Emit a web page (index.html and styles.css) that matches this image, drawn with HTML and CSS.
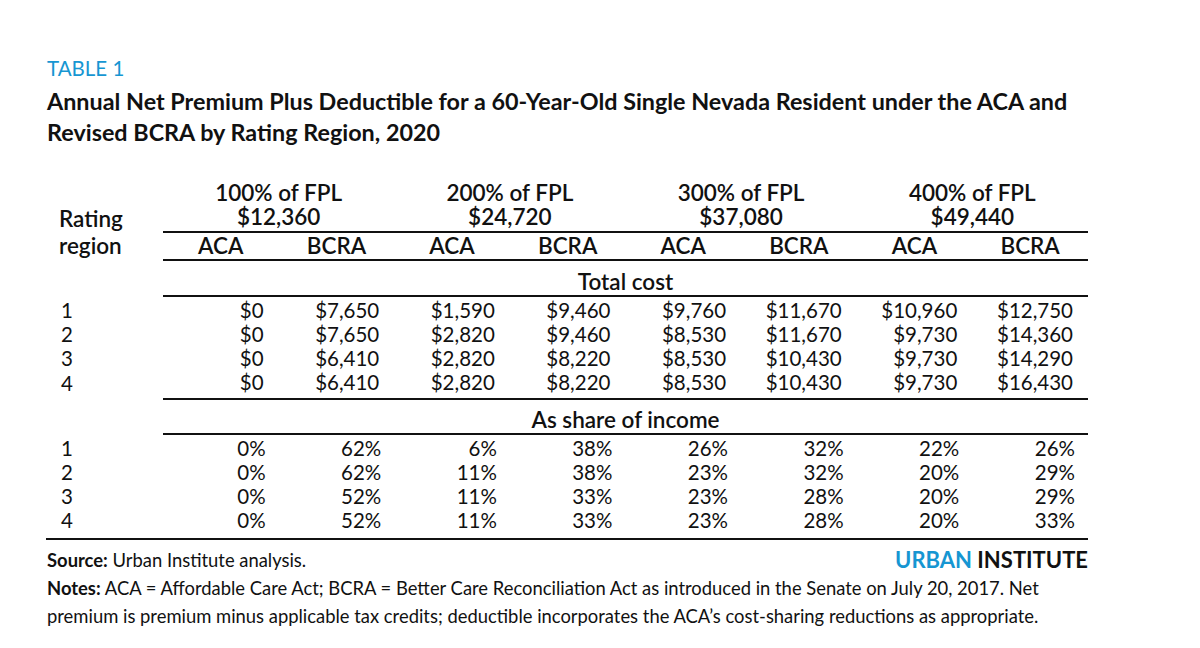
FILE: index.html
```html
<!DOCTYPE html>
<html lang="en">
<head>
<meta charset="utf-8">
<title>Table 1</title>
<link rel="stylesheet" href="styles.css">
</head>
<body>
<div class="page">
  <div class="label">TABLE 1</div>
  <h1 class="title">Annual Net Premium Plus Deductible for a 60-Year-Old Single Nevada Resident under the ACA and Revised BCRA by Rating Region, 2020</h1>

  <table class="data">
    <colgroup>
      <col class="c-region">
      <col class="c-num"><col class="c-num"><col class="c-num"><col class="c-num">
      <col class="c-num"><col class="c-num"><col class="c-num"><col class="c-num">
    </colgroup>
    <thead>
      <tr class="r-group">
        <th class="h-region" rowspan="2">Rating<br>region</th>
        <th colspan="2" class="h-group">100% of FPL<br>$12,360</th>
        <th colspan="2" class="h-group">200% of FPL<br>$24,720</th>
        <th colspan="2" class="h-group">300% of FPL<br>$37,080</th>
        <th colspan="2" class="h-group">400% of FPL<br>$49,440</th>
      </tr>
      <tr class="r-sub">
        <th>ACA</th><th>BCRA</th><th>ACA</th><th>BCRA</th>
        <th>ACA</th><th>BCRA</th><th>ACA</th><th>BCRA</th>
      </tr>
    </thead>
    <tbody class="sec sec-cost">
      <tr class="r-sec">
        <td class="blank"></td>
        <th colspan="8">Total cost</th>
      </tr>
      <tr class="first"><td class="rg">1</td><td>$0</td><td>$7,650</td><td>$1,590</td><td>$9,460</td><td>$9,760</td><td>$11,670</td><td>$10,960</td><td>$12,750</td></tr>
      <tr><td class="rg">2</td><td>$0</td><td>$7,650</td><td>$2,820</td><td>$9,460</td><td>$8,530</td><td>$11,670</td><td>$9,730</td><td>$14,360</td></tr>
      <tr><td class="rg">3</td><td>$0</td><td>$6,410</td><td>$2,820</td><td>$8,220</td><td>$8,530</td><td>$10,430</td><td>$9,730</td><td>$14,290</td></tr>
      <tr class="last"><td class="rg">4</td><td>$0</td><td>$6,410</td><td>$2,820</td><td>$8,220</td><td>$8,530</td><td>$10,430</td><td>$9,730</td><td>$16,430</td></tr>
    </tbody>
    <tbody class="sec sec-end">
      <tr class="r-sec">
        <td class="blank"></td>
        <th colspan="8">As share of income</th>
      </tr>
      <tr class="first"><td class="rg">1</td><td class="pc">0%</td><td class="pc">62%</td><td class="pc">6%</td><td class="pc">38%</td><td class="pc">26%</td><td class="pc">32%</td><td class="pc">22%</td><td class="pc">26%</td></tr>
      <tr><td class="rg">2</td><td class="pc">0%</td><td class="pc">62%</td><td class="pc">11%</td><td class="pc">38%</td><td class="pc">23%</td><td class="pc">32%</td><td class="pc">20%</td><td class="pc">29%</td></tr>
      <tr><td class="rg">3</td><td class="pc">0%</td><td class="pc">52%</td><td class="pc">11%</td><td class="pc">33%</td><td class="pc">23%</td><td class="pc">28%</td><td class="pc">20%</td><td class="pc">29%</td></tr>
      <tr class="last"><td class="rg">4</td><td class="pc">0%</td><td class="pc">52%</td><td class="pc">11%</td><td class="pc">33%</td><td class="pc">23%</td><td class="pc">28%</td><td class="pc">20%</td><td class="pc">33%</td></tr>
    </tbody>
  </table>

  <div class="foot">
    <p class="source"><b>Source:</b> Urban Institute analysis.</p>
    <div class="brand"><span class="urban">URBAN</span> INSTITUTE</div>
  </div>
  <p class="notes"><b>Notes:</b> ACA = Affordable Care Act; BCRA = Better Care Reconciliation Act as introduced in the Senate on July 20, 2017. Net premium is premium minus applicable tax credits; deductible incorporates the ACA’s cost-sharing reductions as appropriate.</p>
</div>
</body>
</html>
```

FILE: styles.css
```css
* { box-sizing: border-box; }

html, body {
  margin: 0;
  padding: 0;
  background: #ffffff;
}

body {
  font-family: Lato, "Open Sans", "Liberation Sans", sans-serif;
  color: #111111;
}

.page {
  width: 1200px;
  height: 648px;
  padding: 56px 0 0 47px;
  overflow: hidden;
}

.label {
  color: #1696d2;
  font-size: 20.5px;
  line-height: 24px;
  font-weight: 400;
}

.title {
  margin: 6px 0 0 0;
  width: 1060px;
  font-size: 23.35px;
  line-height: 31px;
  font-weight: 700;
}

.data {
  margin-top: 32px;
  margin-left: -1px;
  border-collapse: collapse;
  table-layout: fixed;
  width: 1042px;
  font-size: 20.5px;
  line-height: 24px;
}

.c-region { width: 117px; }
.c-num { width: 115.6px; }

.data th, .data td {
  padding: 0;
}

.data th {
  font-size: 22.5px;
  font-weight: 600;
  text-align: center;
}

.h-region {
  text-align: left !important;
  vertical-align: bottom;
  padding-left: 13px !important;
  padding-bottom: 1px !important;
  line-height: 27px;
}

.r-group th.h-group {
  padding-top: 1px;
  padding-bottom: 2px;
  border-bottom: 2px solid #111;
}

.r-sub th {
  height: 28px;
  border-bottom: 2px solid #111;
  padding-top: 0;
}

.r-sec th {
  padding-top: 8px;
  padding-bottom: 1px;
  border-bottom: 2px solid #111;
}

.sec-cost .r-sec th { padding-top: 9px; }

.r-sec td.blank { border-bottom: none; }

.data td {
  text-align: right;
  padding-right: 15px;
}

.data td.pc { padding-right: 13px; }

.data td.rg {
  text-align: left;
  padding-left: 15px;
  padding-right: 0;
}

.sec tr.first td { padding-top: 1px; }

.sec tr.last td { padding-bottom: 4px; }
.sec tr.last td:not(.rg) { border-bottom: 2px solid #111; }

.sec-end tr.last td { padding-bottom: 6px; }
.sec-end tr.last td.rg { border-bottom: 2px solid #111; }

.foot {
  width: 1041px;
  display: flex;
  justify-content: space-between;
  align-items: center;
  margin-top: 6px;
  height: 28px;
}

.source {
  margin: 0;
  font-size: 18.4px;
  line-height: 28px;
}

.brand {
  font-size: 22px;
  font-weight: 700;
  line-height: 28px;
  color: #111;
}

.brand .urban { color: #1696d2; }

.notes {
  margin: 0;
  width: 1010px;
  font-size: 18.4px;
  line-height: 28px;
}
```
